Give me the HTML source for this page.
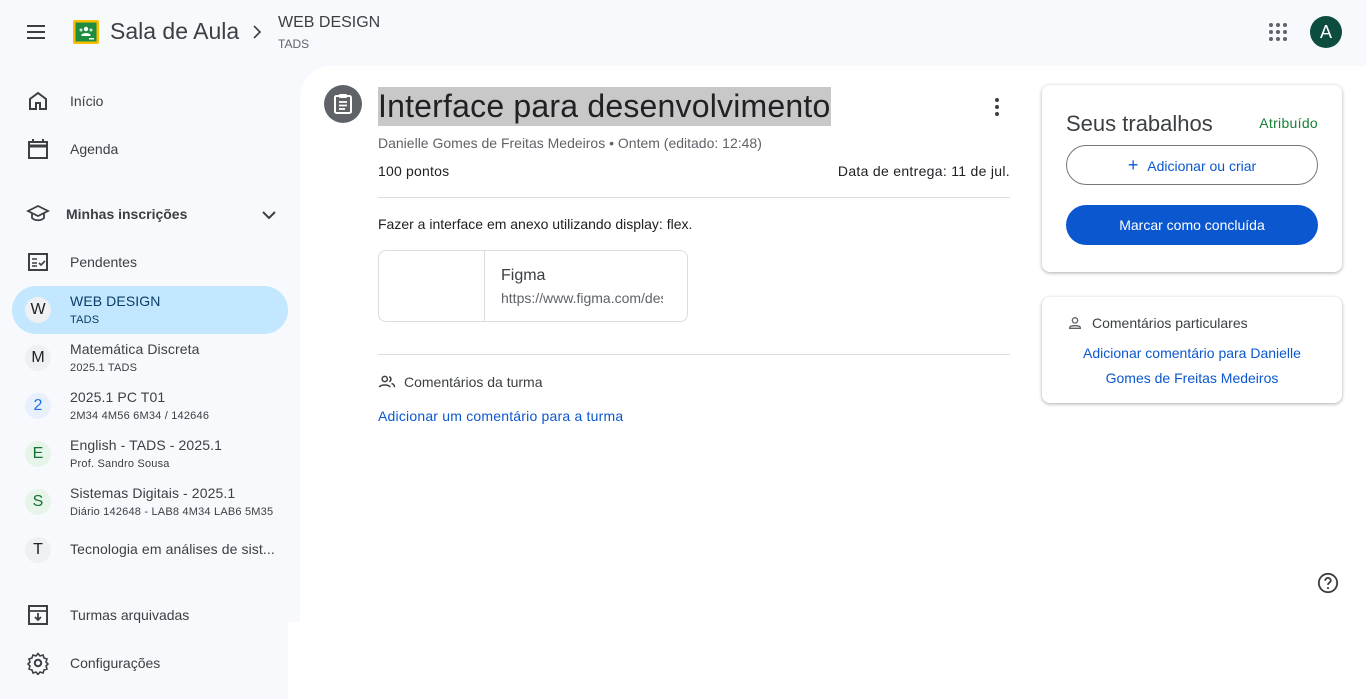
<!DOCTYPE html>
<html><head><meta charset="utf-8"><style>
*{box-sizing:border-box;margin:0;padding:0}
body{width:1366px;height:699px;overflow:hidden;background:#f8f9fd;font-family:"Liberation Sans",sans-serif;color:#3c4043;position:relative}
.abs{position:absolute}
.main{position:absolute;left:300px;top:66px;right:0;bottom:0;background:#fff;border-top-left-radius:32px}
.item{position:absolute;left:0;height:48px;width:288px;display:flex;align-items:center}
.item .ic{position:absolute;left:26px;width:24px;height:24px}
.item .t{position:absolute;left:70px;font-size:14px;color:#3c4043}
.av{position:absolute;left:25px;width:26px;height:26px;border-radius:50%;background:#eef0f3;text-align:center;line-height:26px;font-size:16px;color:#202124}
.ct{position:absolute;left:70px;top:7px;font-size:14px;color:#3c4043;white-space:nowrap;letter-spacing:.1px}
.cs{position:absolute;left:70px;top:28px;font-size:11px;color:#3c4043;white-space:nowrap;letter-spacing:.2px}
.card{position:absolute;background:#fff;border-radius:8px;box-shadow:0 1px 3px rgba(60,64,67,.3),0 1px 4px rgba(60,64,67,.15)}
.link{color:#0b57d0;font-size:14px}
</style></head><body>
<svg class="abs" style="left:24px;top:20px" width="24" height="24" viewBox="0 0 24 24"><path d="M3 6h18M3 12h18M3 18h18" stroke="#3c4043" stroke-width="2"/></svg>
<svg class="abs" style="left:73px;top:20px" width="26" height="24" viewBox="0 0 26 24"><rect x="0" y="0" width="26" height="24" rx="2" fill="#fbbc04"/><rect x="2.5" y="2.5" width="21" height="19" fill="#1e8e3e"/><circle cx="13" cy="9" r="2.2" fill="#fff"/><path d="M8.5 15c0-2.5 9-2.5 9 0v1h-9z" fill="#fff"/><circle cx="8" cy="10" r="1.5" fill="#cfe8d5"/><circle cx="18" cy="10" r="1.5" fill="#cfe8d5"/><rect x="16" y="18" width="5" height="1.5" fill="#fff"/></svg>
<div class="abs" style="left:110px;top:18px;font-size:23px;color:#3c4043">Sala de Aula</div>
<svg class="abs" style="left:250px;top:24px" width="14" height="16" viewBox="0 0 14 16"><path d="M4 2l6 6-6 6" stroke="#3c4043" stroke-width="1.6" fill="none"/></svg>
<div class="abs" style="left:278px;top:14px;font-size:16px;color:#3c4043">WEB DESIGN</div>
<div class="abs" style="left:278px;top:37px;font-size:12px;color:#5f6368">TADS</div>
<svg class="abs" style="left:1268px;top:22px" width="20" height="20" viewBox="0 0 20 20" fill="#5f6368"><circle cx="3" cy="3" r="2"/><circle cx="10" cy="3" r="2"/><circle cx="17" cy="3" r="2"/><circle cx="3" cy="10" r="2"/><circle cx="10" cy="10" r="2"/><circle cx="17" cy="10" r="2"/><circle cx="3" cy="17" r="2"/><circle cx="10" cy="17" r="2"/><circle cx="17" cy="17" r="2"/></svg>
<div class="abs" style="left:1310px;top:16px;width:32px;height:32px;border-radius:50%;background:#0d4d3f;color:#fff;text-align:center;line-height:32px;font-size:18px">A</div>

<div class="item" style="top:77px"><svg class="ic" viewBox="0 0 24 24"><path d="M4 20V10l8-6 8 6v10h-6v-6h-4v6z" fill="none" stroke="#3c4043" stroke-width="2"/></svg><span class="t">Início</span></div>
<div class="item" style="top:125px"><svg class="ic" viewBox="0 0 24 24"><rect x="3" y="5" width="18" height="16" fill="none" stroke="#3c4043" stroke-width="2"/><path d="M3 9h18" stroke="#3c4043" stroke-width="3"/><path d="M7 2v4M17 2v4" stroke="#3c4043" stroke-width="2"/></svg><span class="t">Agenda</span></div>
<div class="item" style="top:190px"><svg class="ic" viewBox="0 0 24 24"><path d="M2 9l10-5 10 5-10 5z M6 11v5c3 3 9 3 12 0v-5" fill="none" stroke="#3c4043" stroke-width="1.8"/></svg><span class="t" style="left:66px;font-weight:bold">Minhas inscrições</span><svg class="abs" style="left:260px;top:16px" width="18" height="18" viewBox="0 0 18 18"><path d="M3 6l6 6 6-6" fill="none" stroke="#3c4043" stroke-width="2"/></svg></div>
<div class="item" style="top:238px"><svg class="ic" viewBox="0 0 24 24"><rect x="3" y="4" width="18" height="16" fill="none" stroke="#3c4043" stroke-width="2"/><path d="M6 9h5M6 13h5M6 16h5M13 13l2 2 4-4" fill="none" stroke="#3c4043" stroke-width="1.6"/></svg><span class="t">Pendentes</span></div>

<div class="abs" style="left:12px;top:286px;width:276px;height:48px;border-radius:24px;background:#c2e7ff"></div>
<div class="abs" style="left:0;top:286px;width:300px;height:48px"><div class="av" style="top:11px">W</div><div class="ct" style="color:#0b3d66">WEB DESIGN</div><div class="cs" style="color:#0b3d66">TADS</div></div>
<div class="abs" style="left:0;top:334px;width:300px;height:48px"><div class="av" style="top:11px">M</div><div class="ct">Matemática Discreta</div><div class="cs">2025.1 TADS</div></div>
<div class="abs" style="left:0;top:382px;width:300px;height:48px"><div class="av" style="top:11px;background:#e8f0fe;color:#1a73e8">2</div><div class="ct">2025.1 PC T01</div><div class="cs">2M34 4M56 6M34 / 142646</div></div>
<div class="abs" style="left:0;top:430px;width:300px;height:48px"><div class="av" style="top:11px;background:#e6f4ea;color:#137333">E</div><div class="ct">English - TADS - 2025.1</div><div class="cs">Prof. Sandro Sousa</div></div>
<div class="abs" style="left:0;top:478px;width:300px;height:48px"><div class="av" style="top:11px;background:#e6f4ea;color:#137333">S</div><div class="ct">Sistemas Digitais - 2025.1</div><div class="cs">Diário 142648 - LAB8 4M34 LAB6 5M35</div></div>
<div class="abs" style="left:0;top:526px;width:300px;height:48px"><div class="av" style="top:11px">T</div><div class="ct" style="top:15px">Tecnologia em análises de sist...</div></div>

<div class="item" style="top:591px"><svg class="ic" viewBox="0 0 24 24"><rect x="3" y="3" width="18" height="18" fill="none" stroke="#3c4043" stroke-width="2"/><path d="M3 8h18M12 10v7M9 14l3 3 3-3" fill="none" stroke="#3c4043" stroke-width="1.8"/></svg><span class="t">Turmas arquivadas</span></div>
<div class="item" style="top:639px"><svg class="ic" viewBox="0 0 24 24"><circle cx="12" cy="12" r="3.2" fill="none" stroke="#3c4043" stroke-width="2"/><path d="M12 2.5l2 2.5 3-1 1 3 3 1-1 3 2 2-2 2 1 3-3 1-1 3-3-1-2 2.5-2-2.5-3 1-1-3-3-1 1-3-2-2 2-2-1-3 3-1 1-3 3 1z" fill="none" stroke="#3c4043" stroke-width="1.6"/></svg><span class="t">Configurações</span></div>

<div class="main"></div>
<div class="abs" style="left:288px;top:622px;width:12px;height:77px;background:#fff"></div>
<div class="abs" style="left:324px;top:85px;width:38px;height:38px;border-radius:50%;background:#5f6368"></div>
<svg class="abs" style="left:333px;top:93px" width="20" height="22" viewBox="0 0 20 22"><rect x="2" y="3" width="16" height="17" rx="1.5" fill="none" stroke="#fff" stroke-width="2"/><rect x="6" y="1" width="8" height="4" rx="1" fill="#fff"/><path d="M6 9h8M6 12.5h8M6 16h6" stroke="#fff" stroke-width="1.8"/></svg>
<div class="abs" style="left:378px;top:87px;height:39px;width:453px;background:#c8c8c8"></div>
<div class="abs" style="left:378px;top:88px;font-size:32px;color:#202124;white-space:nowrap;letter-spacing:.2px">Interface para desenvolvimento</div>
<svg class="abs" style="left:987px;top:97px" width="20" height="20" viewBox="0 0 20 20" fill="#3c4043"><circle cx="10" cy="3" r="2"/><circle cx="10" cy="10" r="2"/><circle cx="10" cy="17" r="2"/></svg>
<div class="abs" style="left:378px;top:135px;font-size:14px;color:#5f6368;white-space:nowrap">Danielle Gomes de Freitas Medeiros • Ontem (editado: 12:48)</div>
<div class="abs" style="left:378px;top:163px;font-size:14px;color:#202124;letter-spacing:.2px">100 pontos</div>
<div class="abs" style="right:356px;top:163px;font-size:14px;color:#202124;letter-spacing:.3px">Data de entrega: 11 de jul.</div>
<div class="abs" style="left:378px;top:197px;width:632px;height:1px;background:#dadce0"></div>
<div class="abs" style="left:378px;top:216px;font-size:14px;color:#202124">Fazer a interface em anexo utilizando display: flex.</div>
<div class="abs" style="left:378px;top:250px;width:310px;height:72px;border:1px solid #dadce0;border-radius:8px;overflow:hidden">
<div class="abs" style="left:105px;top:0;width:1px;height:72px;background:#dadce0"></div>
<div class="abs" style="left:122px;top:16px;font-size:16px;color:#3c4043">Figma</div>
<div class="abs" style="left:122px;top:39px;font-size:14px;color:#5f6368;white-space:nowrap;width:162px;overflow:hidden">https://www.figma.com/design</div>
</div>
<div class="abs" style="left:378px;top:354px;width:632px;height:1px;background:#dadce0"></div>
<svg class="abs" style="left:378px;top:373px" width="18" height="18" viewBox="0 0 24 24"><circle cx="9" cy="8" r="3.5" fill="none" stroke="#3c4043" stroke-width="2"/><path d="M2 19c0-4 14-4 14 0M15 5a3.5 3.5 0 010 6.5M18 14c2 .5 4 2 4 5" fill="none" stroke="#3c4043" stroke-width="2"/></svg>
<div class="abs" style="left:404px;top:374px;font-size:14px;color:#3c4043">Comentários da turma</div>
<div class="abs link" style="left:378px;top:408px;letter-spacing:.2px">Adicionar um comentário para a turma</div>

<div class="card" style="left:1042px;top:85px;width:300px;height:187px">
<div class="abs" style="left:24px;top:26px;font-size:22px;color:#3c4043">Seus trabalhos</div>
<div class="abs" style="right:24px;top:30px;font-size:14px;color:#188038;letter-spacing:.3px">Atribuído</div>
<div class="abs" style="left:24px;top:60px;width:252px;height:40px;border:1px solid #747775;border-radius:20px;text-align:center;line-height:38px" ><span class="link" style="font-size:18px">+</span>&nbsp;&nbsp;<span class="link">Adicionar ou criar</span></div>
<div class="abs" style="left:24px;top:120px;width:252px;height:40px;background:#0b57d0;border-radius:20px;text-align:center;line-height:40px;color:#fff;font-size:14px">Marcar como concluída</div>
</div>
<div class="card" style="left:1042px;top:297px;width:300px;height:106px">
<svg class="abs" style="left:25px;top:18px" width="16" height="16" viewBox="0 0 24 24"><circle cx="12" cy="8" r="4" fill="none" stroke="#5f6368" stroke-width="2"/><path d="M4 20v-1c0-4 16-4 16 0v1z" fill="none" stroke="#5f6368" stroke-width="2"/></svg>
<div class="abs" style="left:50px;top:18px;font-size:14px;color:#3c4043">Comentários particulares</div>
<div class="abs link" style="left:0;width:300px;top:44px;text-align:center;line-height:25px">Adicionar comentário para Danielle<br>Gomes de Freitas Medeiros</div>
</div>
<svg class="abs" style="left:1317px;top:572px" width="22" height="22" viewBox="0 0 24 24"><circle cx="12" cy="12" r="10" fill="none" stroke="#3c4043" stroke-width="2"/><path d="M9 9.5a3 3 0 116 0c0 2-3 2.2-3 4.5" fill="none" stroke="#3c4043" stroke-width="2"/><circle cx="12" cy="17.5" r="1.2" fill="#3c4043"/></svg>
</body></html>
